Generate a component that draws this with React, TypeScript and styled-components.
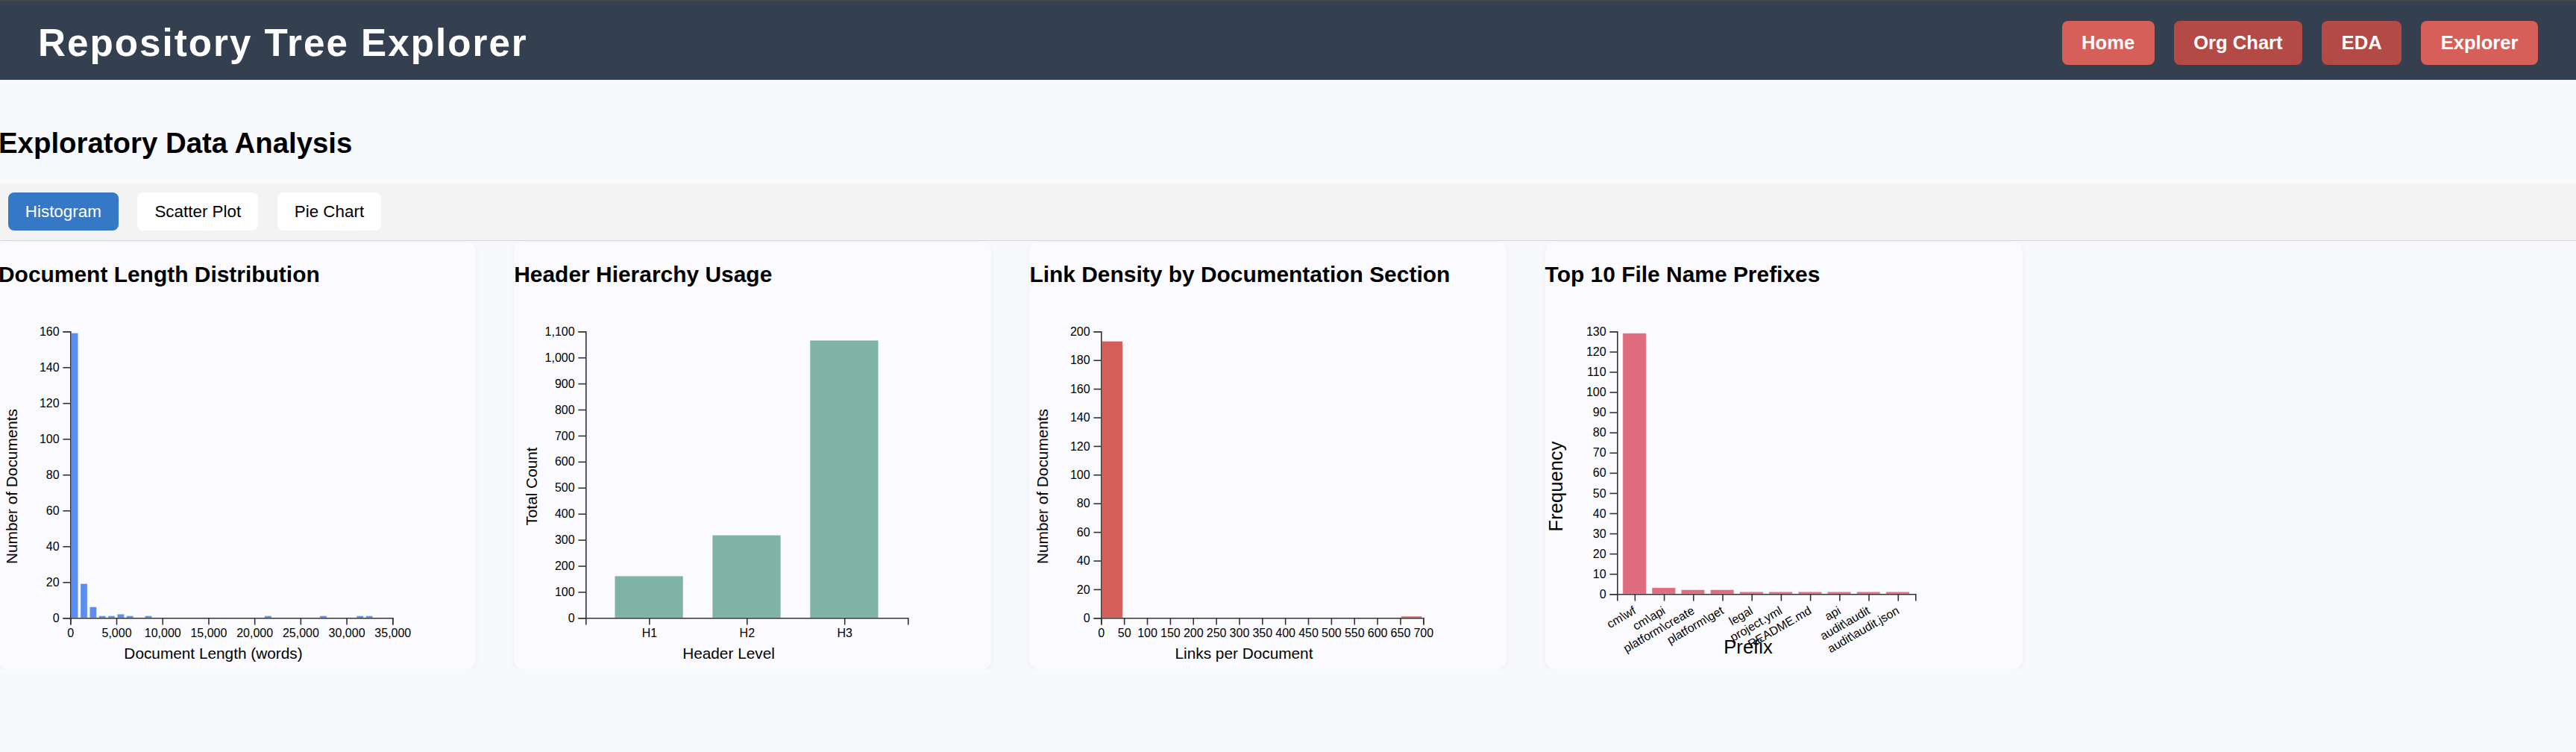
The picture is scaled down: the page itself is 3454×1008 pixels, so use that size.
import React from 'react';
import styled, { createGlobalStyle } from 'styled-components';

const GlobalStyle = createGlobalStyle`
    html, body {
        margin: 0;
        padding: 0;
        min-height: 100%;
        background: #f8f9fd;
    }
    body {
        font-family: 'Liberation Sans', Arial, sans-serif;
        color: #000;
        overflow: hidden;
    }
`;

// charts are drawn in a 360x300 box and shown at 576x480
const VIEW_W = 360;
const VIEW_H = 300;
const AXIS = '#333';
const fmt = (n: number) => n.toLocaleString('en-US');
const range = (from: number, to: number, step: number) => {
    const out: number[] = [];
    for (let v = from; v <= to + 1e-9; v += step) out.push(v);
    return out;
};

type LeftAxisProps = { max: number; step: number; height: number };

const LeftAxis = ({ max, step, height }: LeftAxisProps) => {
    const y = (v: number) => height - (v / max) * height;
    return (
        <g>
            <path d={`M-6,${height + 0.5}H0.5V0.5H-6`} fill="none" stroke={AXIS} />
            {range(0, max, step).map((t) => (
                <g key={t} transform={`translate(0,${y(t) + 0.5})`}>
                    <line x2={-6} stroke={AXIS} />
                    <text x={-9} dy="0.32em" textAnchor="end" fontSize={10}>
                        {fmt(t)}
                    </text>
                </g>
            ))}
        </g>
    );
};

type BottomTick = { x: number; label: string };

const BottomAxis = ({ ticks, width, height, rotated }: { ticks: BottomTick[]; width: number; height: number; rotated?: boolean }) => (
    <g transform={`translate(0,${height})`}>
        <path d={`M0.5,6V0.5H${width + 0.5}V6`} fill="none" stroke={AXIS} />
        {ticks.map((t) => (
            <g key={t.label} transform={`translate(${t.x + 0.5},0)`}>
                <line y2={6} stroke={AXIS} />
                {rotated ? (
                    <text transform="translate(1.5,16) rotate(-30)" textAnchor="end" fontSize={10}>
                        {t.label}
                    </text>
                ) : (
                    <text y={9} dy="0.71em" textAnchor="middle" fontSize={10}>
                        {t.label}
                    </text>
                )}
            </g>
        ))}
    </g>
);

type HistogramProps = {
    counts: number[];
    binSize: number;
    xMax: number;
    xStep: number;
    yMax: number;
    yStep: number;
    color: string;
    xLabel: string;
    yLabel: string;
    yLabelAt: number;
};

const Histogram = ({ counts, binSize, xMax, xStep, yMax, yStep, color, xLabel, yLabel, yLabelAt }: HistogramProps) => {
    const w = 270;
    const h = 240;
    const x = (v: number) => (v / xMax) * w;
    const y = (v: number) => h - (v / yMax) * h;
    return (
        <ChartSvg viewBox={`0 0 ${VIEW_W} ${VIEW_H}`}>
            <g transform="translate(60,20)">
                {counts.map((c, i) => (
                    <rect
                        key={i}
                        x={x(i * binSize) + 1}
                        y={y(c)}
                        width={x(binSize) - 2}
                        height={h - y(c)}
                        fill={color}
                        stroke="#fff"
                        strokeOpacity={0.45}
                        strokeWidth={0.5}
                    />
                ))}
                <LeftAxis max={yMax} step={yStep} height={h} />
                <BottomAxis
                    width={w}
                    height={h}
                    ticks={range(0, xMax, xStep).map((t) => ({ x: x(t), label: fmt(t) }))}
                />
            </g>
            <AxisTitle x={180} y={294.4} textAnchor="middle" $size={13}>
                {xLabel}
            </AxisTitle>
            <AxisTitle transform="rotate(-90)" x={-150} y={yLabelAt} textAnchor="middle" $size={13}>
                {yLabel}
            </AxisTitle>
        </ChartSvg>
    );
};

type BandChartProps = {
    labels: string[];
    values: number[];
    padding: number;
    width: number;
    height: number;
    yMax: number;
    yStep: number;
    color: string;
    xLabel: string;
    yLabel: string;
    xLabelX: number;
    xLabelY: number;
    yLabelAt: number;
    titleSize: number;
    rotated?: boolean;
};

const BandChart = (p: BandChartProps) => {
    const n = p.labels.length;
    const step = p.width / (n + p.padding);
    const bw = step * (1 - p.padding);
    const x0 = (i: number) => step * p.padding + i * step;
    const y = (v: number) => p.height - (v / p.yMax) * p.height;
    return (
        <ChartSvg viewBox={`0 0 ${VIEW_W} ${VIEW_H}`}>
            <g transform="translate(60,20)">
                {p.values.map((v, i) => (
                    <rect
                        key={p.labels[i]}
                        x={x0(i)}
                        y={y(v)}
                        width={bw}
                        height={p.height - y(v)}
                        fill={p.color}
                        stroke="#fff"
                        strokeOpacity={0.45}
                        strokeWidth={0.5}
                    />
                ))}
                <LeftAxis max={p.yMax} step={p.yStep} height={p.height} />
                <BottomAxis
                    width={p.width}
                    height={p.height}
                    rotated={p.rotated}
                    ticks={p.labels.map((l, i) => ({ x: x0(i) + bw / 2, label: l }))}
                />
            </g>
            <AxisTitle x={p.xLabelX} y={p.xLabelY} textAnchor="middle" $size={p.titleSize}>
                {p.xLabel}
            </AxisTitle>
            <AxisTitle transform="rotate(-90)" x={-150} y={p.yLabelAt} textAnchor="middle" $size={p.titleSize}>
                {p.yLabel}
            </AxisTitle>
        </ChartSvg>
    );
};

const docLengthBins = (() => {
    const bins = new Array(35).fill(0);
    [159, 19, 6, 1, 1, 2, 1, 0, 1].forEach((v, i) => (bins[i] = v));
    [21, 27, 31, 32].forEach((i) => (bins[i] = 1));
    return bins;
})();

const linkBins = (() => {
    const bins = new Array(14).fill(0);
    bins[0] = 193;
    bins[13] = 1;
    return bins;
})();

const prefixes = [
    'cm\\wf',
    'cm\\api',
    'platform\\create',
    'platform\\get',
    'legal',
    'project.yml',
    'README.md',
    'api',
    'audit\\audit',
    'audit\\audit.json',
];

const App = () => {
    return (
        <>
            <GlobalStyle />
            <Header>
                <Brand>Repository Tree Explorer</Brand>
                <Nav>
                    <NavButton $tone="light">Home</NavButton>
                    <NavButton $tone="dark">Org Chart</NavButton>
                    <NavButton $tone="dark">EDA</NavButton>
                    <NavButton $tone="light">Explorer</NavButton>
                </Nav>
            </Header>
            <Main>
                <PageTitle>Exploratory Data Analysis</PageTitle>
                <TabBar>
                    <Tab $active>Histogram</Tab>
                    <Tab>Scatter Plot</Tab>
                    <Tab>Pie Chart</Tab>
                </TabBar>
                <CardRow>
                    <Card>
                        <CardTitle>Document Length Distribution</CardTitle>
                        <Histogram
                            counts={docLengthBins}
                            binSize={1000}
                            xMax={35000}
                            xStep={5000}
                            yMax={160}
                            yStep={20}
                            color="#5a8dee"
                            xLabel="Document Length (words)"
                            yLabel="Number of Documents"
                            yLabelAt={15.8}
                        />
                    </Card>
                    <Card>
                        <CardTitle>Header Hierarchy Usage</CardTitle>
                        <BandChart
                            labels={['H1', 'H2', 'H3']}
                            values={[160, 317, 1065]}
                            padding={0.3}
                            width={270}
                            height={240}
                            yMax={1100}
                            yStep={100}
                            color="#7fb3a5"
                            xLabel="Header Level"
                            yLabel="Total Count"
                            xLabelX={180}
                            xLabelY={294.4}
                            yLabelAt={19.5}
                            titleSize={13}
                        />
                    </Card>
                    <Card>
                        <CardTitle>Link Density by Documentation Section</CardTitle>
                        <Histogram
                            counts={linkBins}
                            binSize={50}
                            xMax={700}
                            xStep={50}
                            yMax={200}
                            yStep={20}
                            color="#d45f5a"
                            xLabel="Links per Document"
                            yLabel="Number of Documents"
                            yLabelAt={15.5}
                        />
                    </Card>
                    <Card>
                        <CardTitle>Top 10 File Name Prefixes</CardTitle>
                        <BandChart
                            labels={prefixes}
                            values={[129, 3, 2, 2, 1, 1, 1, 1, 1, 1]}
                            padding={0.2}
                            width={250}
                            height={220}
                            yMax={130}
                            yStep={10}
                            color="#e06c80"
                            xLabel="Prefix"
                            yLabel="Frequency"
                            xLabelX={170}
                            xLabelY={289.8}
                            yLabelAt={14.3}
                            titleSize={16}
                            rotated
                        />
                    </Card>
                </CardRow>
            </Main>
        </>
    );
};

export default App;

const Header = styled.header`
    height: 107px;
    box-sizing: border-box;
    border-top: 2px solid #454648;
    padding: 6px 51px 0;
    background: #343f50;
    display: flex;
    align-items: center;
    justify-content: space-between;
`;

const Brand = styled.h1`
    margin: 0;
    color: #fff;
    font-size: 51.2px;
    font-weight: 700;
    letter-spacing: 2px;
    line-height: normal;
`;

const Nav = styled.nav`
    display: flex;
    gap: 26px;
`;

const NavButton = styled.button<{ $tone: 'light' | 'dark' }>`
    height: 59px;
    padding: 0 26.5px;
    border: none;
    border-radius: 8px;
    background: ${(p) => (p.$tone === 'light' ? '#d65f5a' : '#b44a45')};
    color: #fff;
    font-family: 'Liberation Sans', Arial, sans-serif;
    font-size: 25.6px;
    font-weight: 700;
    cursor: pointer;
`;

const Main = styled.main`
    margin-left: -2px;
    padding-top: 62.6px;
`;

const PageTitle = styled.h2`
    margin: 0 0 32px;
    font-size: 38.4px;
    font-weight: 700;
    line-height: normal;
`;

const TabBar = styled.div`
    display: flex;
    gap: 25.6px;
    padding: 12.8px;
    background: #f3f3f3;
    border-bottom: 1px solid #dadada;
`;

const Tab = styled.button<{ $active?: boolean }>`
    height: 51px;
    padding: 0 23px;
    border: none;
    border-radius: 8px;
    background: ${(p) => (p.$active ? '#3578c6' : '#fff')};
    color: ${(p) => (p.$active ? '#fff' : '#000')};
    font-family: 'Liberation Sans', Arial, sans-serif;
    font-size: 22.4px;
    cursor: pointer;
`;

const CardRow = styled.div`
    display: flex;
    gap: 51.2px;
    margin-top: 1px;
`;

const Card = styled.section`
    width: 640px;
    padding-bottom: 5px;
    background: #fbfbff;
    border-radius: 13px;
    box-shadow: 0 2px 8px rgba(0, 0, 0, 0.05);
    display: flex;
    flex-direction: column;
`;

const CardTitle = styled.h3`
    margin: 27px 0;
    font-size: 29.95px;
    font-weight: 700;
    line-height: normal;
`;

const ChartSvg = styled.svg`
    display: block;
    width: 576px;
    height: 480px;
    overflow: visible;
    font-family: 'Liberation Sans', Arial, sans-serif;
`;

const AxisTitle = styled.text<{ $size: number }>`
    font-size: ${(p) => p.$size}px;
    fill: #000;
`;
